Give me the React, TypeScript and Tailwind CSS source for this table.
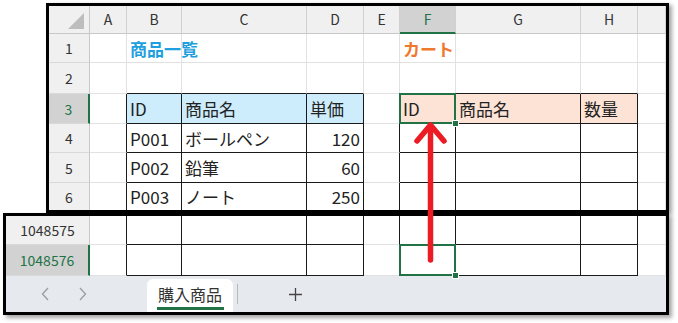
import React from 'react';

type Row = {
  n: string;
  h: string;
  table?: boolean;
  head?: boolean;
  sel?: boolean;
  last?: boolean;
  cells?: Record<string, React.ReactNode>;
};

const COLS = ['A', 'B', 'C', 'D', 'E', 'F', 'G', 'H', 'X'];
const T_COLS = ['B', 'C', 'D', 'F', 'G', 'H'];

const topRows: Row[] = [
  {
    n: '1',
    h: 'h-[29px]',
    cells: {
      B: <span className="relative z-[5] font-bold text-[#1fa0de] text-[17px] whitespace-nowrap">商品一覧</span>,
      F: <span className="relative z-[5] font-bold text-[#f0782c] text-[17px] whitespace-nowrap">カート</span>,
    },
  },
  { n: '2', h: 'h-[31px]' },
  {
    n: '3',
    h: 'h-[30px]',
    table: true,
    head: true,
    sel: true,
    cells: { B: 'ID', C: '商品名', D: '単価', F: 'ID', G: '商品名', H: '数量' },
  },
  { n: '4', h: 'h-[29px]', table: true, cells: { B: 'P001', C: 'ボールペン', D: '120' } },
  { n: '5', h: 'h-[30px]', table: true, cells: { B: 'P002', C: '鉛筆', D: '60' } },
  { n: '6', h: 'h-[27px]', table: true, last: true, cells: { B: 'P003', C: 'ノート', D: '250' } },
];

const bottomRows: Row[] = [
  { n: '1048575', h: 'h-[29px]', table: true },
  { n: '1048576', h: 'h-[31px]', table: true, sel: true },
];

function isT(col: string, row?: Row) {
  return !!row && !!row.table && T_COLS.includes(col);
}

function Cells({ row, next, active }: { row: Row; next?: Row; active?: boolean }) {
  return (
    <>
      {COLS.map((c, i) => {
        const nc = COLS[i + 1];
        const rBlack = isT(c, row) || (nc ? isT(nc, row) : false);
        const bBlack = isT(c, row) || isT(c, next);
        const bg = row.head
          ? ['B', 'C', 'D'].includes(c)
            ? 'bg-[#cdedfc]'
            : ['F', 'G', 'H'].includes(c)
            ? 'bg-[#fce3d5]'
            : 'bg-white'
          : 'bg-white';
        const content = row.cells?.[c];
        const right = c === 'D' && !row.head;
        return (
          <div
            key={c}
            className={`relative flex items-center ${bg} border-r ${rBlack ? 'border-r-[#1a1a1a]' : 'border-r-[#e1e1e1]'} ${
              row.last ? 'border-b-0' : `border-b ${bBlack ? 'border-b-[#1a1a1a]' : 'border-b-[#e1e1e1]'}`
            } ${right ? 'justify-end pr-[3px]' : 'pl-[3px]'} text-[17px] text-[#222] leading-none`}
          >
            {content}
            {active && c === 'F' && (
              <>
                <span className="absolute -left-px -top-px -right-px -bottom-px border-2 border-[#217346] z-10" />
                <span className="absolute -right-[4px] -bottom-[4px] w-[7px] h-[7px] bg-[#217346] border border-white z-20" />
              </>
            )}
          </div>
        );
      })}
    </>
  );
}

function RowHead({ row }: { row: Row }) {
  return (
    <div
      className={`flex items-center justify-center text-[14px] leading-none ${
        row.sel
          ? 'bg-[#d2d2d2] text-[#217346] border-r-2 border-r-[#217346]'
          : 'bg-[#f0f0f0] text-[#333] border-r border-r-[#c8c8c8]'
      } ${row.last ? '' : 'border-b border-b-[#d9d9d9]'}`}
    >
      {row.n}
    </div>
  );
}

export default function App() {
  const topGrid =
    'grid grid-cols-[41px_37px_55px_125px_57px_36px_56px_125px_57px_28px]';
  const botGrid =
    'grid grid-cols-[84px_37px_55px_125px_57px_36px_56px_125px_57px_28px]';

  return (
    <div
      className="relative w-[678px] h-[323px] bg-white overflow-hidden"
      style={{ fontFamily: '"Noto Sans CJK JP", "Noto Sans", sans-serif' }}
    >
      <div className="pt-[3px]">
        {/* top window */}
        <div className="ml-[46px] w-[623px] border-[3px] border-black bg-white shadow-[3px_2px_4px_rgba(0,0,0,0.35)]">
          <div className={`${topGrid} h-[28px] text-[14px] text-[#333]`}>
            <div className="relative bg-[#f0f0f0] border-r border-r-[#c8c8c8] border-b border-b-[#c8c8c8]">
              <svg className="absolute left-0 top-0" width="41" height="28">
                <polygon points="35,7 35,23 19,23" fill="#bdbdbd" />
              </svg>
            </div>
            {COLS.map((c) => (
              <div
                key={c}
                className={`flex items-center justify-center ${
                  c === 'F'
                    ? 'bg-[#d2d2d2] text-[#217346] border-b-2 border-b-[#217346]'
                    : 'bg-[#f0f0f0] border-b border-b-[#c8c8c8]'
                } border-r border-r-[#d0d0d0]`}
              >
                {c === 'X' ? '' : c}
              </div>
            ))}
          </div>
          {topRows.map((r, i) => (
            <div key={r.n} className={`${topGrid} ${r.h}`}>
              <RowHead row={r} />
              <Cells row={r} next={topRows[i + 1]} active={r.n === '3'} />
            </div>
          ))}
        </div>

        {/* bottom window */}
        <div className="ml-[3px] w-[666px] border-[3px] border-black bg-white shadow-[3px_3px_4px_rgba(0,0,0,0.35)]">
          {bottomRows.map((r, i) => (
            <div key={r.n} className={`${botGrid} ${r.h}`}>
              <RowHead row={r} />
              <Cells row={r} next={bottomRows[i + 1]} active={r.n === '1048576'} />
            </div>
          ))}
          <div className="flex items-center h-[36px] bg-[#e6e9ee]">
            <div className="flex items-center w-[141px] pl-[35px] gap-[28px]">
              <svg width="9" height="14" viewBox="0 0 9 14">
                <path d="M7 1 L1.5 7 L7 13" fill="none" stroke="#9c9c9c" strokeWidth="1.3" />
              </svg>
              <svg width="9" height="14" viewBox="0 0 9 14">
                <path d="M2 1 L7.5 7 L2 13" fill="none" stroke="#9c9c9c" strokeWidth="1.3" />
              </svg>
            </div>
            <div className="self-end flex flex-col items-center w-[86px] h-[33px] bg-white rounded-t-[6px]">
              <span className="mt-[4px] text-[16px] leading-[22px] text-[#333]">購入商品</span>
              <span className="mt-[2px] w-[67px] h-[3px] bg-[#217346]" />
            </div>
            <div className="ml-[4px] w-px h-[20px] bg-[#b8b8b8]" />
            <div className="ml-[50px]">
              <svg width="15" height="15" viewBox="0 0 15 15">
                <path d="M7.5 1 V14 M1 7.5 H14" stroke="#444" strokeWidth="1.3" />
              </svg>
            </div>
          </div>
        </div>
      </div>

      {/* red arrow overlay */}
      <svg className="absolute left-0 top-0 pointer-events-none z-30" width="678" height="323">
        <line x1="430.5" y1="260" x2="430.5" y2="128" stroke="#ec1c24" strokeWidth="5.5" strokeLinecap="round" />
        <polyline
          points="417,141 430.5,125 444,141"
          fill="none"
          stroke="#ec1c24"
          strokeWidth="5.5"
          strokeLinecap="round"
          strokeLinejoin="round"
        />
      </svg>
    </div>
  );
}
